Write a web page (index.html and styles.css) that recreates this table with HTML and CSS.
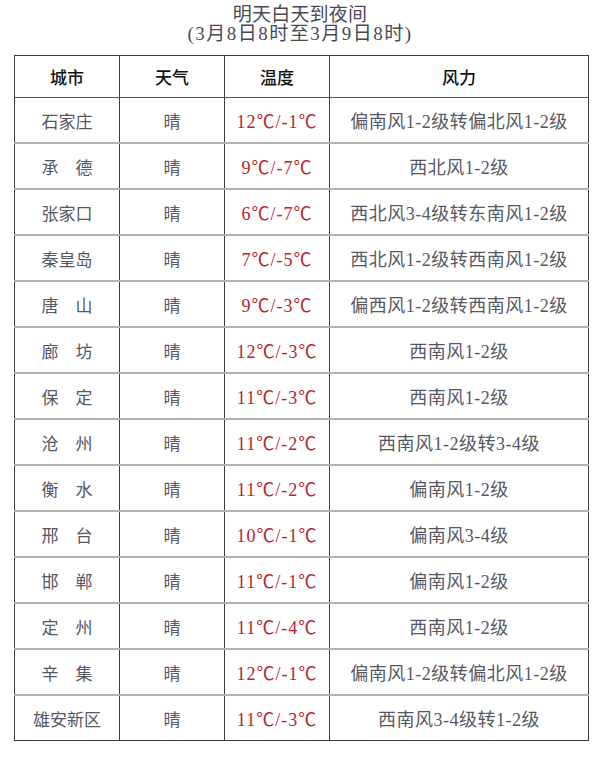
FILE: index.html
```html
<!DOCTYPE html>
<html lang="zh-CN">
<head>
<meta charset="utf-8">
<link rel="stylesheet" href="styles.css">
</head>
<body>
<div class="page">
  <div class="title">
    <div class="title-main">明天白天到夜间</div>
    <div class="title-sub">(3月8日8时至3月9日8时)</div>
  </div>
  <table class="weather">
    <colgroup>
      <col class="c1"><col class="c2"><col class="c3"><col class="c4">
    </colgroup>
    <thead>
      <tr><th>城市</th><th>天气</th><th>温度</th><th>风力</th></tr>
    </thead>
    <tbody>
      <tr><td>石家庄</td><td>晴</td><td class="t">12℃/-1℃</td><td class="w">偏南风1-2级转偏北风1-2级</td></tr>
      <tr><td>承　德</td><td>晴</td><td class="t">9℃/-7℃</td><td class="w">西北风1-2级</td></tr>
      <tr><td>张家口</td><td>晴</td><td class="t">6℃/-7℃</td><td class="w">西北风3-4级转东南风1-2级</td></tr>
      <tr><td>秦皇岛</td><td>晴</td><td class="t">7℃/-5℃</td><td class="w">西北风1-2级转西南风1-2级</td></tr>
      <tr><td>唐　山</td><td>晴</td><td class="t">9℃/-3℃</td><td class="w">偏西风1-2级转西南风1-2级</td></tr>
      <tr><td>廊　坊</td><td>晴</td><td class="t">12℃/-3℃</td><td class="w">西南风1-2级</td></tr>
      <tr><td>保　定</td><td>晴</td><td class="t">11℃/-3℃</td><td class="w">西南风1-2级</td></tr>
      <tr><td>沧　州</td><td>晴</td><td class="t">11℃/-2℃</td><td class="w">西南风1-2级转3-4级</td></tr>
      <tr><td>衡　水</td><td>晴</td><td class="t">11℃/-2℃</td><td class="w">偏南风1-2级</td></tr>
      <tr><td>邢　台</td><td>晴</td><td class="t">10℃/-1℃</td><td class="w">偏南风3-4级</td></tr>
      <tr><td>邯　郸</td><td>晴</td><td class="t">11℃/-1℃</td><td class="w">偏南风1-2级</td></tr>
      <tr><td>定　州</td><td>晴</td><td class="t">11℃/-4℃</td><td class="w">西南风1-2级</td></tr>
      <tr><td>辛　集</td><td>晴</td><td class="t">12℃/-1℃</td><td class="w">偏南风1-2级转偏北风1-2级</td></tr>
      <tr><td>雄安新区</td><td>晴</td><td class="t">11℃/-3℃</td><td class="w">西南风3-4级转1-2级</td></tr>
    </tbody>
  </table>
</div>
</body>
</html>
```

FILE: styles.css
```css
html, body {
  margin: 0;
  padding: 0;
  background: #ffffff;
}

.page {
  width: 600px;
  height: 775px;
  padding-top: 5px;
  box-sizing: border-box;
  font-family: "Liberation Serif", "Noto Sans CJK SC", serif;
}

.title {
  text-align: center;
  font-size: 19px;
  line-height: 19px;
  color: #4a4a55;
  margin-bottom: 12px;
}

.title-main {
  letter-spacing: 0.2px;
}

.title-sub {
  letter-spacing: 1.5px;
}

.weather {
  margin-left: 14px;
  width: 575px;
  border-collapse: collapse;
  table-layout: fixed;
  border: 1px solid #3a3a3a;
}

.c1, .c2, .c3 { width: 105px; }
.c4 { width: auto; }

.weather th,
.weather td {
  border-left: 1px solid #3a3a3a;
  border-right: 1px solid #3a3a3a;
  text-align: center;
  vertical-align: middle;
  padding: 0;
  font-weight: normal;
}

.weather th {
  height: 41px;
  font-size: 17px;
  color: #111111;
  border-bottom: 1px solid #555555;
  font-weight: 500;
}

.weather td {
  height: 44px;
  font-size: 17px;
  color: #555763;
  border-top: 2px solid #b0b0b0;
}

.weather tbody tr:first-child td {
  border-top: none;
}

.weather tbody tr:last-child td {
  border-bottom: 1px solid #3a3a3a;
}

.weather td.t {
  color: #b8242b;
  font-size: 18px;
  letter-spacing: 1px;
}

.weather td.w {
  font-size: 18px;
  letter-spacing: 0.5px;
}
```
